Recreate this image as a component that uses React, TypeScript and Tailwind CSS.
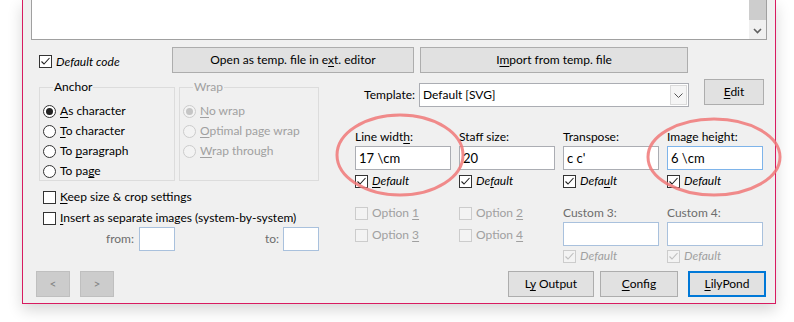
import type { ReactNode } from "react";

const font = { fontFamily: 'Lato, "Noto Sans", sans-serif' };

function U({ children }: { children: ReactNode }) {
  return <span className="underline underline-offset-2">{children}</span>;
}

function Box({ checked, disabled }: { checked?: boolean; disabled?: boolean }) {
  return (
    <span
      className={
        "flex h-[13px] w-[13px] shrink-0 items-center justify-center border " +
        (disabled ? "border-[#cccccc] bg-[#f3f3f3]" : "border-[#333333] bg-white")
      }
    >
      {checked && (
        <svg width="11" height="11" viewBox="0 0 11 11">
          <polyline
            points="1.5,5.5 4,8 9.5,2"
            fill="none"
            stroke={disabled ? "#bfbfbf" : "#222"}
            strokeWidth="1.1"
          />
        </svg>
      )}
    </span>
  );
}

function Check({
  checked,
  disabled,
  italic,
  children,
}: {
  checked?: boolean;
  disabled?: boolean;
  italic?: boolean;
  children: ReactNode;
}) {
  return (
    <div className="flex h-4 items-center gap-[4px]">
      <Box checked={checked} disabled={disabled} />
      <span
        className={
          (italic ? "italic " : "") + (disabled ? "text-[#a0a0a0]" : "text-black")
        }
      >
        {children}
      </span>
    </div>
  );
}

function Radio({
  checked,
  disabled,
  children,
}: {
  checked?: boolean;
  disabled?: boolean;
  children: ReactNode;
}) {
  return (
    <div className="flex h-5 items-center gap-[4px]">
      <span
        className={
          "flex h-[13px] w-[13px] shrink-0 items-center justify-center rounded-full border " +
          (disabled ? "border-[#cccccc] bg-[#f3f3f3]" : "border-[#333333] bg-white")
        }
      >
        {checked && (
          <span
            className={
              "h-[7px] w-[7px] rounded-full " + (disabled ? "bg-[#c5c5c5]" : "bg-[#222]")
            }
          />
        )}
      </span>
      <span className={disabled ? "text-[#a0a0a0]" : "text-black"}>{children}</span>
    </div>
  );
}

function Btn({
  w,
  children,
  disabled,
  primary,
}: {
  w: string;
  children: ReactNode;
  disabled?: boolean;
  primary?: boolean;
}) {
  return (
    <div
      className={
        "flex h-[26px] shrink-0 items-center justify-center " +
        w +
        (primary
          ? " border-2 border-[#0078d7] bg-[#e1e1e1]"
          : disabled
            ? " border border-[#bfbfbf] bg-[#cccccc] text-[#838383]"
            : " border border-[#adadad] bg-[#e1e1e1]")
      }
    >
      <span>{children}</span>
    </div>
  );
}

function Input({ value, w, tone }: { value?: string; w: string; tone?: "focus" | "dim" }) {
  const border =
    tone === "focus"
      ? "border-[#7eb4ea]"
      : tone === "dim"
        ? "border-[#a9c1dd]"
        : "border-[#abadb3]";
  return (
    <div className={"flex h-6 items-center border bg-white px-[3px] text-[13px] " + border + " " + w}>
      {value}
    </div>
  );
}

const fields = [
  { label: <>Line widt<U>h</U>:</>, value: "17 \\cm", def: <><U>D</U>efault</> },
  { label: <>Staff size:</>, value: "20", def: <>De<U>f</U>ault</> },
  { label: <>Transpose:</>, value: "c c'", def: <>Defa<U>u</U>lt</> },
  { label: <>Image height:</>, value: "6 \\cm", def: <>Default</>, focus: true },
];

export default function App() {
  return (
    <div
      className="relative h-[322px] w-[794px] overflow-hidden bg-white text-[12px] leading-4 text-black"
      style={font}
    >
      <div className="ml-[22px] flex h-[304px] w-[754px] flex-col border-x border-b border-[#d81b60] bg-[#f0f0f0] shadow-[0_6px_14px_rgba(0,0,0,0.16)]">
        {/* code editor */}
        <div className="ml-[8px] flex h-10 w-[736px] justify-end border-x border-b border-[#a0a0a0] bg-white">
          <div className="flex w-[17px] flex-col bg-[#f0f0f0]">
            <div className="h-5 bg-[#cdcdcd]" />
            <div className="flex flex-1 items-center justify-center pt-[2px]">
              <svg width="9" height="6" viewBox="0 0 9 6">
                <polyline points="1,1 4.5,4.5 8,1" fill="none" stroke="#606060" strokeWidth="1.6" />
              </svg>
            </div>
          </div>
        </div>

        {/* default code + temp file buttons */}
        <div className="mt-[7px] flex h-[26px] items-center pl-[16px]">
          <div className="mt-[3px] w-[133px]">
            <Check checked italic>
              Default code
            </Check>
          </div>
          <Btn w="w-[242px]">
            Open as temp. file in e<U>x</U>t. editor
          </Btn>
          <div className="w-[6px]" />
          <Btn w="w-[268px]">
            I<U>m</U>port from temp. file
          </Btn>
        </div>

        <div className="mt-[6px] flex h-[192px]">
          {/* left column */}
          <div className="ml-[16px] flex w-[280px] flex-col">
            <div className="flex gap-[4px]">
              <fieldset className="h-[102px] w-[136px] border border-[#dcdcdc] pl-[3px]">
                <legend className="ml-[10px] px-[1px] leading-4">Anchor</legend>
                <div className="pt-[6px]">
                  <Radio checked>
                    <U>A</U>s character
                  </Radio>
                  <Radio>
                    <U>T</U>o character
                  </Radio>
                  <Radio>
                    To <U>p</U>aragraph
                  </Radio>
                  <Radio>
                    To pa<U>g</U>e
                  </Radio>
                </div>
              </fieldset>
              <fieldset className="h-[102px] w-[140px] border border-[#dcdcdc] pl-[3px]">
                <legend className="ml-[10px] px-[1px] leading-4 text-[#a0a0a0]">Wrap</legend>
                <div className="pt-[6px]">
                  <Radio checked disabled>
                    <U>N</U>o wrap
                  </Radio>
                  <Radio disabled>
                    <U>O</U>ptimal page wrap
                  </Radio>
                  <Radio disabled>
                    <U>W</U>rap through
                  </Radio>
                </div>
              </fieldset>
            </div>
            <div className="mt-[8px] flex flex-col gap-[5px] pl-[4px]">
              <Check>
                <U>K</U>eep size &amp; crop settings
              </Check>
              <Check>
                <U>I</U>nsert as separate images (system-by-system)
              </Check>
            </div>
            <div className="mt-[1px] flex items-center text-[#6d6d6d]">
              <span className="w-[95px] text-right">from:</span>
              <div className="ml-[5px]">
                <Input w="w-[36px]" tone="dim" />
              </div>
              <span className="w-[104px] text-right">to:</span>
              <div className="ml-[4px]">
                <Input w="w-[36px]" tone="dim" />
              </div>
            </div>
          </div>

          {/* right column */}
          <div className="ml-[36px] flex w-[411px] flex-col">
            <div className="flex h-[27px] items-start">
              <span className="mt-[8px] w-[60px] text-right">Template:</span>
              <div className="ml-[4px] mt-[4px] flex h-6 w-[270px] items-center justify-between border border-[#abadb3] bg-white pl-[3px] pr-[1px]">
                <span>Default [SVG]</span>
                <div className="flex h-5 w-[17px] items-center justify-center border border-[#dadada] bg-[#f5f5f5]">
                  <svg width="9" height="5" viewBox="0 0 9 5">
                    <polyline points="0.5,0.5 4.5,4.5 8.5,0.5" fill="none" stroke="#555" strokeWidth="1" />
                  </svg>
                </div>
              </div>
              <div className="ml-[15px]">
                <Btn w="w-[60px]">
                  <U>E</U>dit
                </Btn>
              </div>
            </div>

            <div className="mt-[23px] flex gap-[8px]">
              {fields.map((f, i) => (
                <div key={i} className="flex w-[96px] flex-col">
                  <span className="h-4">{f.label}</span>
                  <div className="mt-[1px]">
                    <Input value={f.value} w="w-[96px]" tone={f.focus ? "focus" : undefined} />
                  </div>
                  <div className="mt-[3px]">
                    <Check checked italic>
                      {f.def}
                    </Check>
                  </div>
                </div>
              ))}
            </div>

            <div className="mt-[16px] flex gap-[8px]">
              <div className="flex w-[96px] flex-col gap-[6px]">
                <Check disabled>
                  Option <U>1</U>
                </Check>
                <Check disabled>
                  Option <U>3</U>
                </Check>
              </div>
              <div className="flex w-[96px] flex-col gap-[6px]">
                <Check disabled>
                  Option <U>2</U>
                </Check>
                <Check disabled>
                  Option <U>4</U>
                </Check>
              </div>
              {["Custom 3:", "Custom 4:"].map((c) => (
                <div key={c} className="flex w-[96px] flex-col">
                  <span className="h-4 text-[#6d6d6d]">{c}</span>
                  <div className="mt-[1px]">
                    <Input w="w-[96px]" tone="dim" />
                  </div>
                  <div className="mt-[2px]">
                    <Check checked disabled italic>
                      Default
                    </Check>
                  </div>
                </div>
              ))}
            </div>
          </div>
        </div>

        {/* bottom buttons */}
        <div className="flex h-[26px] items-center">
          <div className="ml-[13px] flex gap-[10px]">
            <Btn w="w-[34px]" disabled>
              &lt;
            </Btn>
            <Btn w="w-[34px]" disabled>
              &gt;
            </Btn>
          </div>
          <div className="ml-auto mr-[9px] flex">
            <Btn w="w-[86px]">
              L<U>y</U> Output
            </Btn>
            <div className="w-[6px]" />
            <Btn w="w-[78px]">
              <U>C</U>onfig
            </Btn>
            <div className="w-[10px]" />
            <Btn w="w-[78px]" primary>
              <U>L</U>ilyPond
            </Btn>
          </div>
        </div>
      </div>

      {/* red annotation ellipses */}
      <svg className="pointer-events-none absolute left-0 top-0" width="794" height="322">
        <ellipse cx="400" cy="155" rx="63" ry="40" fill="none" stroke="#f07878" strokeOpacity="0.85" strokeWidth="3" />
        <ellipse cx="714" cy="157" rx="66" ry="38" fill="none" stroke="#f07878" strokeOpacity="0.85" strokeWidth="3" />
      </svg>
    </div>
  );
}
